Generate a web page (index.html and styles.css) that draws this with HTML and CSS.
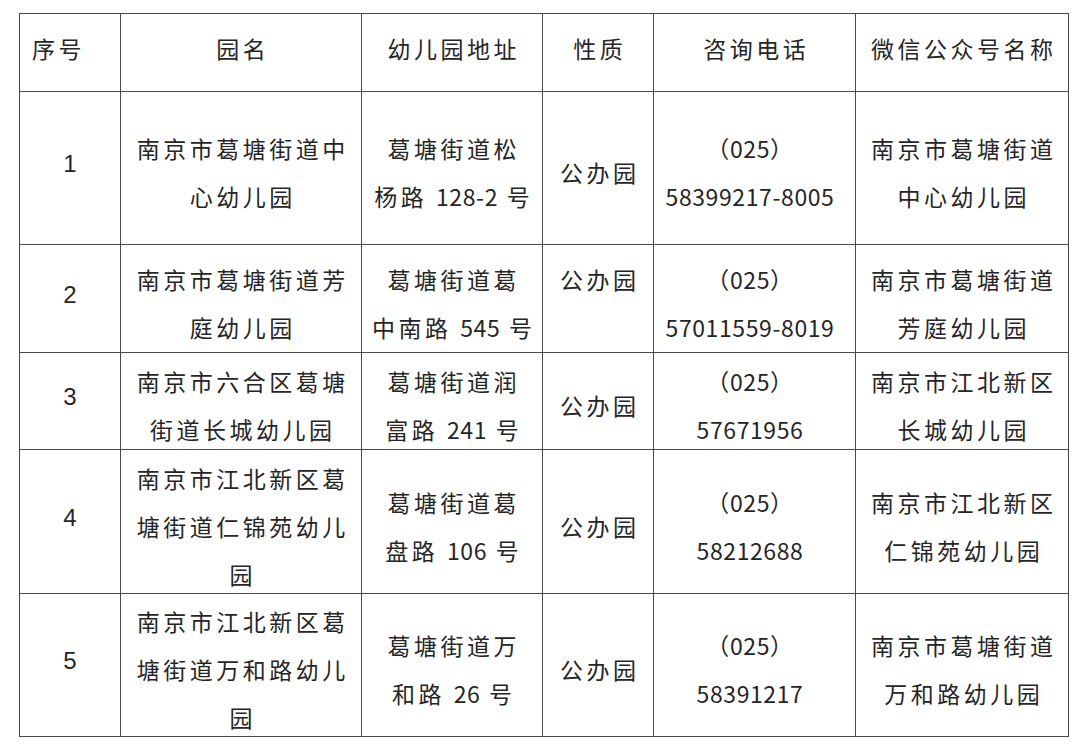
FILE: index.html
```html
<!DOCTYPE html>
<html lang="zh-CN">
<head>
<meta charset="utf-8">
<title>幼儿园信息</title>
<link rel="stylesheet" href="styles.css">
</head>
<body>
<div class="table">
  <div class="cell head left"><div class="txt">序号</div></div>
  <div class="cell head"><div class="txt">园名</div></div>
  <div class="cell head"><div class="txt">幼儿园地址</div></div>
  <div class="cell head"><div class="txt">性质</div></div>
  <div class="cell head"><div class="txt">咨询电话</div></div>
  <div class="cell head"><div class="txt">微信公众号名称</div></div>

  <div class="cell idx"><div class="txt">1</div></div>
  <div class="cell"><div class="txt">南京市葛塘街道中<br>心幼儿园</div></div>
  <div class="cell"><div class="txt">葛塘街道松<br>杨路 <span class="num">128-2</span> 号</div></div>
  <div class="cell"><div class="txt">公办园</div></div>
  <div class="cell tel"><div class="txt"><span class="num">（025）</span><br><span class="num">58399217-8005</span></div></div>
  <div class="cell"><div class="txt">南京市葛塘街道<br>中心幼儿园</div></div>

  <div class="cell idx"><div class="txt">2</div></div>
  <div class="cell"><div class="txt">南京市葛塘街道芳<br>庭幼儿园</div></div>
  <div class="cell"><div class="txt">葛塘街道葛<br>中南路 <span class="num">545</span> 号</div></div>
  <div class="cell top"><div class="txt">公办园</div></div>
  <div class="cell tel"><div class="txt"><span class="num">（025）</span><br><span class="num">57011559-8019</span></div></div>
  <div class="cell"><div class="txt">南京市葛塘街道<br>芳庭幼儿园</div></div>

  <div class="cell idx"><div class="txt">3</div></div>
  <div class="cell"><div class="txt">南京市六合区葛塘<br>街道长城幼儿园</div></div>
  <div class="cell"><div class="txt">葛塘街道润<br>富路 <span class="num">241</span> 号</div></div>
  <div class="cell"><div class="txt">公办园</div></div>
  <div class="cell tel"><div class="txt"><span class="num">（025）</span><br><span class="num">57671956</span></div></div>
  <div class="cell"><div class="txt">南京市江北新区<br>长城幼儿园</div></div>

  <div class="cell idx"><div class="txt">4</div></div>
  <div class="cell"><div class="txt">南京市江北新区葛<br>塘街道仁锦苑幼儿<br>园</div></div>
  <div class="cell"><div class="txt">葛塘街道葛<br>盘路 <span class="num">106</span> 号</div></div>
  <div class="cell"><div class="txt">公办园</div></div>
  <div class="cell tel"><div class="txt"><span class="num">（025）</span><br><span class="num">58212688</span></div></div>
  <div class="cell"><div class="txt">南京市江北新区<br>仁锦苑幼儿园</div></div>

  <div class="cell idx"><div class="txt">5</div></div>
  <div class="cell"><div class="txt">南京市江北新区葛<br>塘街道万和路幼儿<br>园</div></div>
  <div class="cell"><div class="txt">葛塘街道万<br>和路 <span class="num">26</span> 号</div></div>
  <div class="cell"><div class="txt">公办园</div></div>
  <div class="cell tel"><div class="txt"><span class="num">（025）</span><br><span class="num">58391217</span></div></div>
  <div class="cell"><div class="txt">南京市葛塘街道<br>万和路幼儿园</div></div>
</div>
</body>
</html>
```

FILE: styles.css
```css
html, body {
  margin: 0;
  padding: 0;
  background: #ffffff;
}

body {
  font-family: "Noto Sans CJK SC", "Noto Sans", sans-serif;
  color: #262626;
}

.table {
  display: grid;
  grid-template-columns: 101px 241px 181px 111px 202px 213px;
  grid-template-rows: 78px 153px 108px 97px 144px 143px;
  margin: 13px 0 0 19px;
  width: max-content;
  border-left: 1px solid #4a4a4a;
  border-top: 1px solid #4a4a4a;
}

.cell {
  box-sizing: border-box;
  border-right: 1px solid #4a4a4a;
  border-bottom: 1px solid #4a4a4a;
  display: flex;
  flex-direction: column;
  justify-content: center;
  align-items: center;
  text-align: center;
  font-size: 23px;
  line-height: 48px;
  letter-spacing: 3.5px;
  padding: 8px 0 0 3.5px;
  white-space: nowrap;
  overflow: visible;
}

.txt {
  white-space: nowrap;
}

.num {
  letter-spacing: 0.6px;
}

.head {
  padding: 0 0 10px 3.5px;
}

.head.left {
  align-items: flex-start;
  padding-left: 12px;
}

.top {
  justify-content: flex-start;
  padding-top: 10px;
}

.tel {
  padding-left: 0;
  padding-right: 9px;
}

.idx {
  font-family: "Liberation Sans", Arial, sans-serif;
  font-size: 24px;
  letter-spacing: 0;
  padding: 0 0 8px 0;
}
```
